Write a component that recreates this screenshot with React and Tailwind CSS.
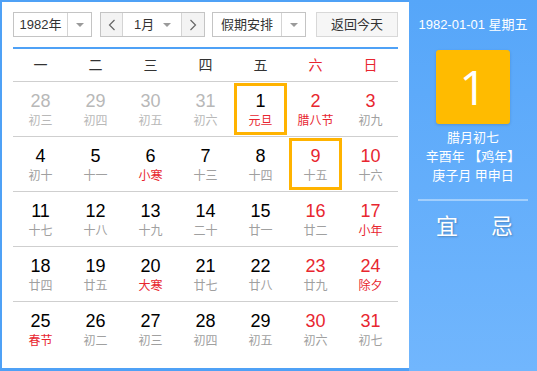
import React from 'react';

const weeks = [
  [
    { d: 28, l: '初三', o: true },
    { d: 29, l: '初四', o: true },
    { d: 30, l: '初五', o: true },
    { d: 31, l: '初六', o: true },
    { d: 1, l: '元旦', lr: true, sel: true },
    { d: 2, l: '腊八节', lr: true, w: true },
    { d: 3, l: '初九', w: true },
  ],
  [
    { d: 4, l: '初十' },
    { d: 5, l: '十一' },
    { d: 6, l: '小寒', lr: true },
    { d: 7, l: '十三' },
    { d: 8, l: '十四' },
    { d: 9, l: '十五', w: true, sel: true },
    { d: 10, l: '十六', w: true },
  ],
  [
    { d: 11, l: '十七' },
    { d: 12, l: '十八' },
    { d: 13, l: '十九' },
    { d: 14, l: '二十' },
    { d: 15, l: '廿一' },
    { d: 16, l: '廿二', w: true },
    { d: 17, l: '小年', lr: true, w: true },
  ],
  [
    { d: 18, l: '廿四' },
    { d: 19, l: '廿五' },
    { d: 20, l: '大寒', lr: true },
    { d: 21, l: '廿七' },
    { d: 22, l: '廿八' },
    { d: 23, l: '廿九', w: true },
    { d: 24, l: '除夕', lr: true, w: true },
  ],
  [
    { d: 25, l: '春节', lr: true },
    { d: 26, l: '初二' },
    { d: 27, l: '初三' },
    { d: 28, l: '初四' },
    { d: 29, l: '初五' },
    { d: 30, l: '初六', w: true },
    { d: 31, l: '初七', w: true },
  ],
];

const weekdays = ['一', '二', '三', '四', '五', '六', '日'];

function Caret() {
  return <span className="block w-0 h-0 border-l-[4px] border-r-[4px] border-t-[4px] border-l-transparent border-r-transparent border-t-[#9a9a9a]" />;
}

function Chevron({ dir }) {
  return (
    <svg width="8" height="12" viewBox="0 0 8 12" fill="none" stroke="#666" strokeWidth="1.2">
      {dir === 'left' ? <path d="M6.5 1 L1.5 6 L6.5 11" /> : <path d="M1.5 1 L6.5 6 L1.5 11" />}
    </svg>
  );
}

function DayCell({ day }) {
  let numColor = 'text-black';
  if (day.o) numColor = 'text-[#b8b8b8]';
  else if (day.w) numColor = 'text-[#e8262f]';
  let lunarColor = 'text-[#a0a0a0]';
  if (day.o) lunarColor = 'text-[#b8b8b8]';
  if (day.lr) lunarColor = 'text-[#e8262f]';
  return (
    <div className="h-full p-px">
      <div className={`h-full flex flex-col items-center justify-center ${day.sel ? 'border-[3px] border-[#ffb300]' : ''}`}>
        <span className={`text-[18px] leading-[22px] ${numColor}`}>{day.d}</span>
        <span className={`text-[12px] leading-[16px] mt-[1px] ${lunarColor}`}>{day.l}</span>
      </div>
    </div>
  );
}

export default function App() {
  return (
    <div
      className="w-[537px] h-[371px] flex bg-[#4fa1f6] overflow-hidden"
      style={{ fontFamily: '"Liberation Sans", "Noto Sans CJK SC", sans-serif' }}
    >
      <div className="w-[407px] ml-[2px] mt-[2px] mb-[3px] bg-white pl-[11px] pr-[11px] pt-[10px] flex flex-col">
        <div className="flex items-center h-[25px] text-[13px] text-[#333]">
          <div className="w-[79px] h-full flex border border-[#c4c4c4]">
            <div className="flex-1 flex items-center justify-center">1982年</div>
            <div className="w-[24px] border-l border-[#d4d4d4] flex items-center justify-center"><Caret /></div>
          </div>
          <div className="ml-[8px] w-[105px] h-full flex border border-[#c4c4c4]">
            <div className="w-[22px] bg-[#f3f3f3] border-r border-[#d4d4d4] flex items-center justify-center"><Chevron dir="left" /></div>
            <div className="flex-1 flex items-center pl-[11px] pr-[10px] justify-between">
              <span>1月</span>
              <Caret />
            </div>
            <div className="w-[23px] bg-[#f3f3f3] border-l border-[#d4d4d4] flex items-center justify-center"><Chevron dir="right" /></div>
          </div>
          <div className="ml-[7px] w-[94px] h-full flex border border-[#c4c4c4]">
            <div className="flex-1 flex items-center justify-center">假期安排</div>
            <div className="w-[24px] border-l border-[#d4d4d4] flex items-center justify-center"><Caret /></div>
          </div>
          <div className="ml-[10px] w-[82px] h-full flex items-center justify-center border border-[#d8d8d8] bg-[#f6f6f6]">
            返回今天
          </div>
        </div>
        <div className="mt-[10px] h-[2px] bg-[#4fa1f6]" />
        <div className="grid grid-cols-7 h-[33px] border-b border-[#cfcfcf] items-center text-[14px]">
          {weekdays.map((w, i) => (
            <div key={w} className={`text-center ${i >= 5 ? 'text-[#e8262f]' : 'text-[#333]'}`}>{w}</div>
          ))}
        </div>
        {weeks.map((week, wi) => (
          <div
            key={wi}
            className={`grid grid-cols-7 h-[55px] ${wi < weeks.length - 1 ? 'border-b border-[#cfcfcf]' : ''}`}
          >
            {week.map((day, di) => <DayCell key={di} day={day} />)}
          </div>
        ))}
      </div>
      <div className="flex-1 bg-gradient-to-b from-[#56a6f9] to-[#71b6fd] flex flex-col items-center text-white">
        <div className="mt-[16px] text-[13px] leading-[18px]">1982-01-01 星期五</div>
        <div className="mt-[16px] w-[74px] h-[74px] rounded-[3px] bg-[#ffbb00] flex items-center justify-center shadow-[0_1px_3px_rgba(0,0,0,0.15)]">
          <span className="text-[48px] leading-none font-normal" style={{ fontFamily: '"Open Sans", "Liberation Sans", sans-serif' }}>1</span>
        </div>
        <div className="mt-[4px] text-[13px] leading-[19px] flex flex-col items-center">
          <span>腊月初七</span>
          <span>辛酉年 【鸡年】</span>
          <span>庚子月 甲申日</span>
        </div>
        <div className="mt-[14px] w-[110px] h-[2px] bg-white/40" />
        <div className="mt-[12px] w-full flex justify-between pl-[27px] pr-[24px] text-[22px] leading-[28px] [text-shadow:1px_1px_2px_rgba(0,0,0,0.25)]">
          <span>宜</span>
          <span>忌</span>
        </div>
      </div>
    </div>
  );
}
